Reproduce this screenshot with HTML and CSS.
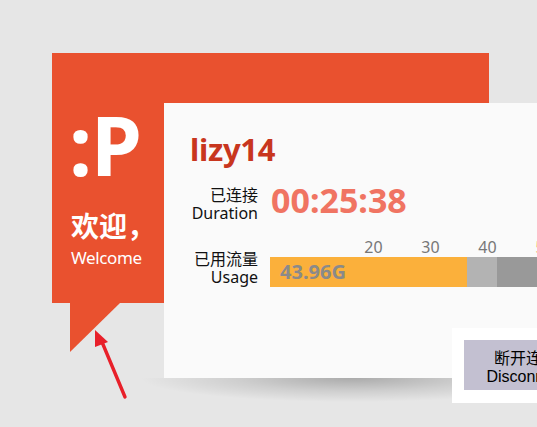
FILE: index.html
```html
<!DOCTYPE html>
<html lang="zh-CN">
<head>
<meta charset="utf-8">
<title>lizy14</title>
<link rel="stylesheet" href="styles.css">
</head>
<body>
<div class="stage">
  <div class="bubble">
    <div class="panel">
      <div class="face">:P</div>
      <div class="hello">欢迎，</div>
      <div class="welcome">Welcome</div>
    </div>
    <div class="tail"></div>
  </div>
  <div class="card">
    <div class="user">lizy14</div>
    <div class="row row-time">
      <div class="label">已连接<br>Duration</div>
      <div class="time">00:25:38</div>
    </div>
    <div class="row row-usage">
      <div class="label">已用流量<br>Usage</div>
      <div class="meter">
        <div class="scale">
          <span>20</span><span>30</span><span>40</span><span class="hot">50</span>
        </div>
        <div class="bar">
          <div class="seg used">43.96G</div>
          <div class="seg light"></div>
          <div class="seg dark"></div>
        </div>
      </div>
    </div>
  </div>
</div>
<div class="action">
  <button class="disconnect">断开连接<br>Disconnect</button>
</div>
<svg class="arrow" width="60" height="80" viewBox="0 0 60 80">
  <line x1="45" y1="77" x2="22" y2="22" stroke="#e8202a" stroke-width="3.4" stroke-linecap="round"/>
  <polygon points="15,10 15,27 28,22" fill="#e8202a"/>
</svg>
</body>
</html>
```

FILE: styles.css
```css
html, body {
  margin: 0;
  padding: 0;
}
body {
  background: #e6e6e6;
  width: 537px;
  height: 427px;
  overflow: hidden;
  position: relative;
  font-family: "Noto Sans", "Noto Sans CJK SC", sans-serif;
}
.stage {
  display: grid;
  padding: 53px 0 0 52px;
  align-items: start;
}
.bubble {
  grid-area: 1 / 1;
  display: flex;
  flex-direction: column;
}
.panel {
  width: 437px;
  height: 250px;
  background: #e9512f;
  box-sizing: border-box;
  padding: 51px 0 0 19px;
  color: #fff;
}
.face {
  font-size: 82px;
  font-weight: 700;
  line-height: 80px;
  margin-left: -2px;
  letter-spacing: -1px;
}
.hello {
  font-size: 28px;
  font-weight: 700;
  line-height: 32px;
  margin-top: 26px;
}
.welcome {
  font-size: 17px;
  line-height: 20px;
  margin-top: 6px;
  letter-spacing: -0.4px;
}
.tail {
  width: 0;
  height: 0;
  margin-left: 18px;
  border-top: 49px solid #e9512f;
  border-right: 50px solid transparent;
}
.card {
  grid-area: 1 / 1;
  margin: 50px 0 0 112px;
  width: 390px;
  height: 275px;
  background: #fafafa;
  box-sizing: border-box;
  padding: 28px 0 0 26px;
  position: relative;
}
.card::after {
  content: "";
  position: absolute;
  left: -24px;
  right: -10px;
  top: 100%;
  height: 24px;
  background: radial-gradient(ellipse 50% 100% at 50% 0, rgba(0,0,0,0.26), rgba(0,0,0,0.1) 55%, rgba(0,0,0,0) 100%);
}
.user {
  font-size: 31px;
  font-weight: 700;
  line-height: 36px;
  color: #c8361e;
  letter-spacing: -0.3px;
}
.row {
  display: flex;
  gap: 12px;
}
.label {
  width: 68px;
  text-align: right;
  font-size: 16px;
  line-height: 18px;
  color: #111;
  white-space: nowrap;
  flex: none;
}
.row-time {
  margin-top: 19px;
  align-items: flex-start;
}
.time {
  font-size: 34px;
  font-weight: 700;
  line-height: 36px;
  color: #f07462;
  margin-top: -4px;
  margin-left: 1px;
}
.row-usage {
  margin-top: 16px;
  align-items: flex-end;
}
.row-usage .label {
  margin-bottom: 1px;
}
.meter {
  display: flex;
  flex-direction: column;
  gap: 1px;
}
.scale {
  display: flex;
  padding-left: 75px;
  font-size: 16px;
  line-height: 18px;
  color: #777;
}
.scale span {
  width: 57px;
  flex: none;
  text-align: center;
}
.scale .hot {
  color: #f9c07a;
}
.bar {
  display: flex;
  height: 30px;
}
.seg {
  flex: none;
  height: 30px;
}
.used {
  width: 197px;
  background: #fbb03b;
  box-sizing: border-box;
  padding-left: 10px;
  font-size: 20px;
  font-weight: 700;
  line-height: 30px;
  color: #8a8a8a;
}
.light {
  width: 30px;
  background: #b3b3b3;
}
.dark {
  width: 80px;
  background: #999999;
}
.action {
  position: absolute;
  left: 452px;
  top: 328px;
  width: 160px;
  background: #ffffff;
  padding: 12px 12px 13px;
  z-index: 2;
}
.disconnect {
  display: block;
  width: 124px;
  height: 50px;
  border: 0;
  margin: 0;
  padding: 5px 0 0;
  background: #c3c0d1;
  font-family: "Liberation Sans", "Noto Sans CJK SC", sans-serif;
  font-size: 16px;
  line-height: 18px;
  color: #000;
  text-align: center;
}
.arrow {
  position: absolute;
  left: 80px;
  top: 320px;
  z-index: 3;
}
```
